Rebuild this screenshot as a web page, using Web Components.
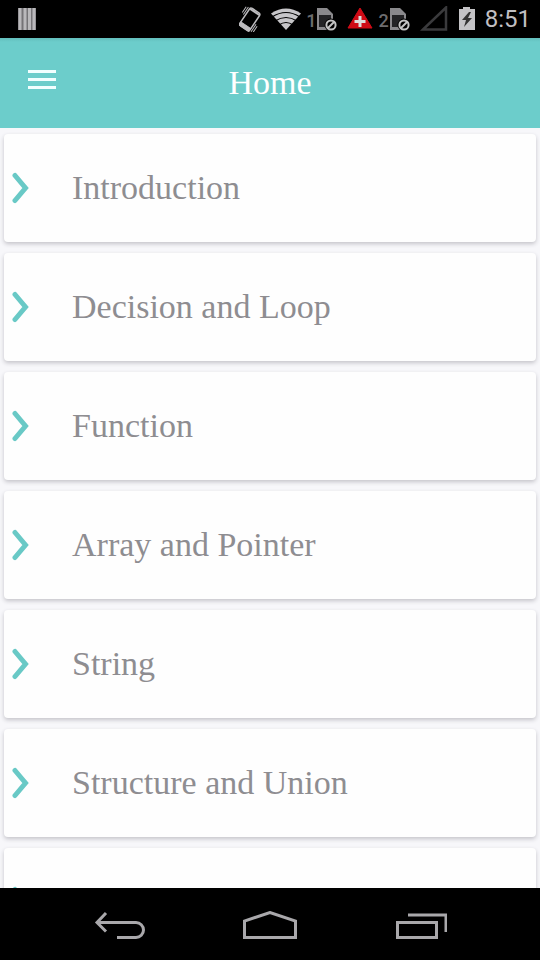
<!DOCTYPE html>
<html lang="en">
<head>
<meta charset="utf-8">
<meta name="viewport" content="width=device-width, initial-scale=1">
<title>Home</title>
<style>
  body { margin: 0; background: #f7f7fa; font-family: "Liberation Serif", serif; }
</style>
</head>
<body>
<app-screen>
  <status-bar slot="status" time="8:51"></status-bar>
  <app-header slot="header">Home</app-header>
  <topic-card>Introduction</topic-card>
  <topic-card>Decision and Loop</topic-card>
  <topic-card>Function</topic-card>
  <topic-card>Array and Pointer</topic-card>
  <topic-card>String</topic-card>
  <topic-card>Structure and Union</topic-card>
  <topic-card></topic-card>
  <nav-bar slot="nav"></nav-bar>
</app-screen>

<script>
const define = (name, html) => customElements.define(name, class extends HTMLElement {
  constructor() {
    super();
    this.attachShadow({ mode: "open" }).innerHTML = html;
  }
  connectedCallback() {
    const time = this.shadowRoot.querySelector("time");
    if (time) time.textContent = this.getAttribute("time");
  }
});

define("app-screen", `
  <style>
    :host { display: flex; flex-direction: column; height: 100vh; }
    main { flex: 1; min-height: 0; overflow: hidden; display: flex; flex-direction: column; gap: 11px; padding: 6px 4px 0; background: #f7f7fa; }
  </style>
  <slot name="status"></slot>
  <slot name="header"></slot>
  <main><slot></slot></main>
  <slot name="nav"></slot>`);

define("sim-icon", `
  <style>
    :host { display: flex; align-items: center; gap: 1px; color: #6c6c6e; font: 500 18px/24px Roboto, sans-serif; }
    span { padding-top: 3px; }
    svg { display: block; }
  </style>
  <span><slot></slot></span>
  <svg width="20" height="24" viewBox="0 0 20 24" aria-hidden="true">
    <path d="M0 23V1h10l6 6v16z" fill="#8a898c"/>
    <path d="M2 20V8h12v12z" fill="#242426"/>
    <circle cx="14" cy="18" r="6.5" fill="#000"/>
    <circle cx="14" cy="18" r="4.6" fill="none" stroke="#c4c4c4" stroke-width="2"/>
    <path d="M11 21l6-6" stroke="#c4c4c4" stroke-width="2"/>
  </svg>`);

define("status-bar", `
  <style>
    :host { display: flex; align-items: center; flex: none; height: 38px; padding: 0 9px 0 18px; background: #000; color: #c0bfc2; }
    svg { display: block; flex: none; }
    .icons { display: flex; align-items: center; margin-left: auto; gap: 10px; }
    .wifi { margin-right: -5px; }
    .alert { margin-right: -5px; }
    time { font: 24px/36px Roboto, sans-serif; }
  </style>
  <svg width="18" height="22" viewBox="0 0 18 22" aria-hidden="true">
    <path d="M0 0h18v22H0z" fill="#747376"/>
    <path d="M2 0v22M7 0v22M11.500 0v22M16 0v22" stroke="#b9b8bb" stroke-width="3"/>
  </svg>
  <div class="icons">
    <svg width="22" height="26" viewBox="0 0 22 26" fill="none" stroke="#bcbbbe" aria-hidden="true">
      <g transform="rotate(34 11 13)">
        <rect x="5" y="3" width="12" height="21" rx="2" stroke-width="1.500"/>
        <path d="M5 20.500h12V24H5z" fill="#bcbbbe"/>
        <path d="M5.500 4.500h11" stroke-width="2"/>
        <path d="M3 4v9M1 5v7M19 14v9M21 15v7"/>
      </g>
    </svg>
    <svg class="wifi" width="30" height="24" viewBox="0 0 30 24" aria-hidden="true">
      <path d="M15 23L0 6.500Q15-3.500 30 6.500z" fill="#c7c6c9"/>
      <path d="M1 10Q15 1 29 10M4 14Q15 7 26 14M8 18Q15 13 22 18" fill="none" stroke="#000" stroke-width="1.200"/>
    </svg>
    <sim-icon>1</sim-icon>
    <svg class="alert" width="26" height="24" viewBox="0 0 26 24" aria-hidden="true">
      <path d="M13 1l12 20H1z" fill="#cf0b16" stroke="#cf0b16" stroke-linejoin="round"/>
      <path d="M13 9v11M7.500 14.500h11" stroke="#ddd" stroke-width="3"/>
    </svg>
    <sim-icon>2</sim-icon>
    <svg width="28" height="26" viewBox="0 0 28 26" aria-hidden="true">
      <path d="M3 23.500L26 1.500v22z" fill="none" stroke="#3a3a3c" stroke-width="2.500"/>
    </svg>
    <svg width="17" height="24" viewBox="0 0 17 24" aria-hidden="true">
      <path d="M5 0h7v2h5v21H1V2h4z" fill="#c4c3c6"/>
      <path d="M11 5L4 13h4l-2 7 8-9h-4l3-6z" fill="#333"/>
    </svg>
    <time></time>
  </div>`);

define("app-header", `
  <style>
    :host { display: grid; grid-template-columns: 1fr auto 1fr; align-items: center; flex: none; height: 90px; padding: 0 20px; box-sizing: border-box; background: linear-gradient(#62bfbc, #6ccdcb 4px); color: #fff; }
    button { display: block; width: 44px; height: 44px; padding: 0 8px; border: 0; background: none; }
    svg { display: block; }
    h1 { margin: 0; font-size: 34px; line-height: 40px; font-weight: 400; }
    .menu { padding-bottom: 8px; }
  </style>
  <div class="menu"><button aria-label="Menu">
    <svg width="28" height="22" viewBox="0 0 28 22" aria-hidden="true">
      <path d="M0 3.500h28M0 11.500h28M0 19.500h28" stroke="#f2ffff" stroke-width="3"/>
    </svg>
  </button></div>
  <h1><slot></slot></h1>`);

define("topic-card", `
  <style>
    :host { display: block; flex: none; }
    button { display: flex; align-items: center; gap: 40px; width: 100%; height: 108px; padding: 0 8px; border: 0; border-radius: 4px; background: #fefefe; box-shadow: 0 2px 4px #c4c3c9; color: #8e8d91; font: inherit; font-size: 34px; line-height: 40px; text-align: left; }
    svg { display: block; flex: none; }
  </style>
  <button>
    <svg width="20" height="32" viewBox="0 0 20 32" aria-hidden="true">
      <path d="M3 3.500L13.500 16L3 28.500" fill="none" stroke="#69c9c6" stroke-width="5" stroke-linecap="round" stroke-linejoin="miter"/>
    </svg>
    <span><slot></slot></span>
  </button>`);

define("nav-bar", `
  <style>
    :host { display: block; flex: none; background: #000; }
    nav { display: grid; grid-template-columns: repeat(3, 1fr); width: 84%; height: 72px; margin: 0 auto; }
    button { display: flex; align-items: center; justify-content: center; border: 0; padding: 4px 0 0; background: none; }
    svg { display: block; fill: none; stroke: #a9a8ab; stroke-width: 3; }
  </style>
  <nav aria-label="System">
    <button aria-label="Back"><svg width="52" height="30" viewBox="0 0 52 30"><path d="M13 2L4 11.500l9 9M4 11.500h39a7.500 7.500 0 0 1 0 15H24"/></svg></button>
    <button aria-label="Home"><svg width="56" height="30" viewBox="0 0 56 30"><path d="M2.500 26.500V10L28 1.500L53.500 10v16.500z"/></svg></button>
    <button aria-label="Recent apps"><svg width="52" height="30" viewBox="0 0 52 30"><path d="M2.500 11.500h39v15h-39zM13 4h38v17"/></svg></button>
  </nav>`);
</script>
</body>
</html>
